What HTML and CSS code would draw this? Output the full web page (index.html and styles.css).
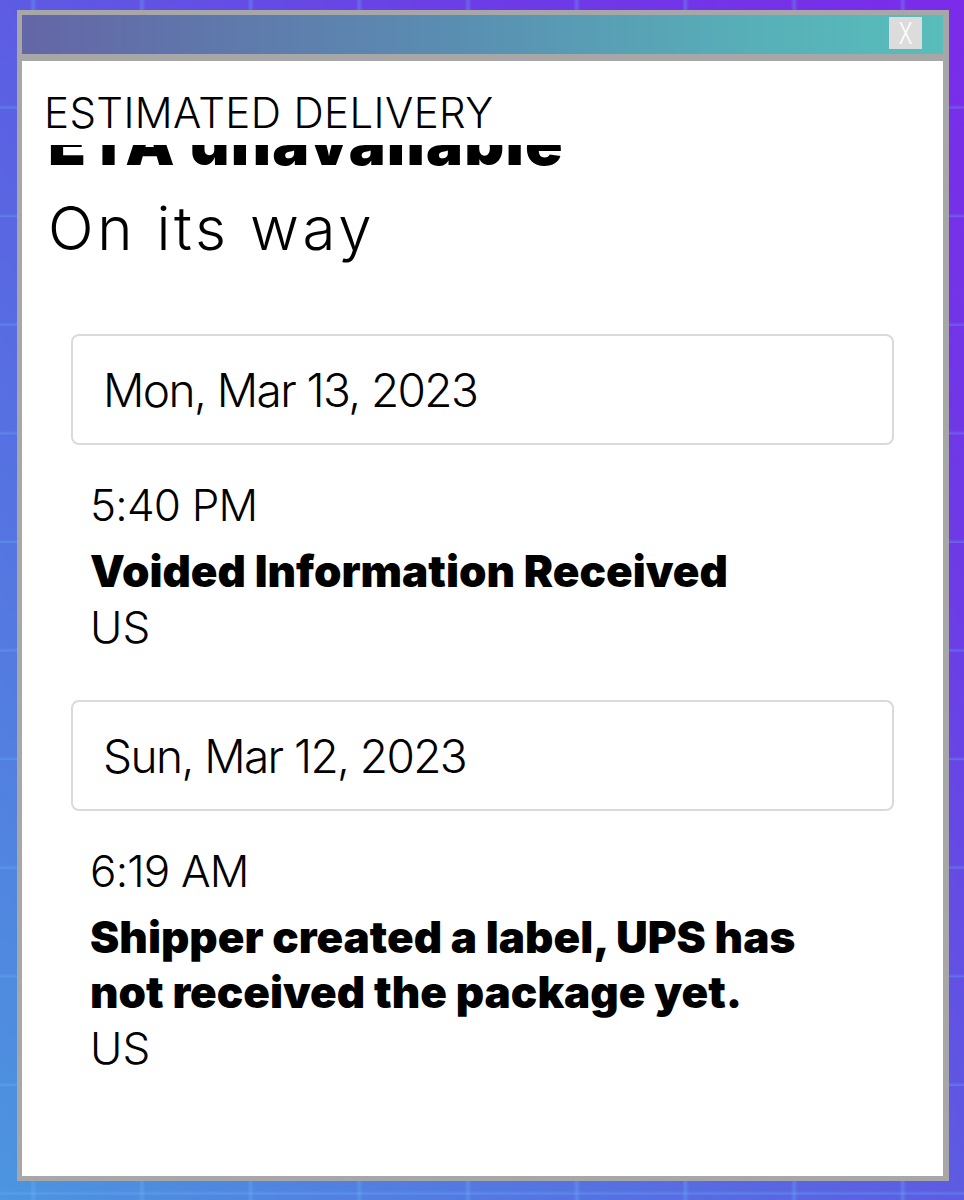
FILE: index.html
```html
<!DOCTYPE html>
<html lang="en">
<head>
  <meta charset="UTF-8">
  <meta name="viewport" content="width=device-width, initial-scale=1.0">
  <title>Tracking - Estimated Delivery</title>
  <link rel="stylesheet" href="styles.css">
</head>
<body>
  <div class="window">
    <div class="titlebar">
      <button class="close-btn"><span>X</span></button>
    </div>
    <div class="content">
      <h2 class="label">ESTIMATED DELIVERY</h2>
      <div class="eta-clip">
        <div class="eta">ETA unavailable</div>
      </div>
      <p class="status">On its way</p>

      <ul class="events">
        <li>
          <div class="day">Mon, Mar 13, 2023</div>
          <div class="event">
            <div class="time">5:40 PM</div>
            <div class="desc">Voided Information Received</div>
            <div class="loc">US</div>
          </div>
        </li>
        <li>
          <div class="day">Sun, Mar 12, 2023</div>
          <div class="event">
            <div class="time">6:19 AM</div>
            <div class="desc">Shipper created a label, UPS has not received the package yet.</div>
            <div class="loc">US</div>
          </div>
        </li>
      </ul>
    </div>
  </div>
</body>
</html>
```

FILE: styles.css
```css
html, body {
  height: 100%;
}
body {
  margin: 0;
  box-sizing: border-box;
  padding: 10px 15px 19px 17px;
  font-family: Inter, "Liberation Sans", sans-serif;
  color: #000;
  background-color: #5b58e2;
  background-image:
    linear-gradient(90deg, transparent 30px, rgba(110, 190, 250, 0.3) 33px, transparent 37px),
    linear-gradient(180deg, transparent 105px, rgba(110, 190, 250, 0.3) 108px, transparent 112px),
    linear-gradient(to top right, #4c95df 0%, #5a62e2 45%, #6c3ce6 75%, #7b2be9 100%);
  background-size: 108.7px 100%, 100% 108.6px, 100% 100%;
  background-repeat: repeat-x, repeat-y, no-repeat;
}
.window {
  height: 100%;
  box-sizing: border-box;
  background-color: #a7a7a7;
  padding: 5px 6px 5px 5px;
  display: flex;
  flex-direction: column;
  gap: 7px;
}
.titlebar {
  height: 39px;
  flex-shrink: 0;
  background: linear-gradient(90deg, #6466a6 0%, #5a8cb1 45%, #57b0b8 80%, #58bdbb 100%);
  display: flex;
  justify-content: flex-end;
  align-items: flex-start;
  padding: 2px 21px 0 0;
  box-sizing: border-box;
}
.close-btn {
  width: 33px;
  height: 32px;
  border: none;
  padding: 0;
  background-color: #dcdcdc;
  color: white;
  font-family: Roboto, sans-serif;
  font-weight: 300;
  font-size: 31px;
  line-height: 33px;
  cursor: pointer;
}
.close-btn span {
  display: inline-block;
  transform: scaleX(0.72);
}
.content {
  flex: 1;
  background-color: white;
  overflow: hidden;
}
.label {
  margin: 0;
  padding: 27px 22px 7px;
  font-size: 42px;
  font-weight: 300;
  line-height: 50px;
  letter-spacing: 0.4px;
  background-color: white;
}
.eta-clip {
  height: 21px;
  overflow: hidden;
  display: flex;
  align-items: flex-end;
  padding-left: 26px;
}
.eta {
  font-size: 62px;
  font-weight: 900;
  line-height: 0.74;
  letter-spacing: 1.2px;
  white-space: nowrap;
}
.status {
  margin: 27px 0 0;
  padding-left: 26px;
  font-size: 60px;
  font-weight: 300;
  line-height: 70px;
  letter-spacing: 3.6px;
}
.events {
  list-style: none;
  margin: 71px 49px 0;
  padding: 0;
}
.events li {
  margin-bottom: 45px;
}
.day {
  height: 111px;
  box-sizing: border-box;
  border: 2px solid #dadada;
  border-radius: 8px;
  padding: 0 29px 0 30px;
  display: flex;
  align-items: center;
  font-size: 46px;
  font-weight: 300;
  letter-spacing: -1.6px;
}
.event {
  padding: 33px 19px 0;
  font-size: 44px;
  line-height: 55px;
}
.time {
  font-weight: 300;
  letter-spacing: -0.8px;
}
.desc {
  margin-top: 11px;
  font-weight: 900;
  max-width: 740px;
}
.loc {
  font-weight: 300;
  margin-top: 1px;
}
```
